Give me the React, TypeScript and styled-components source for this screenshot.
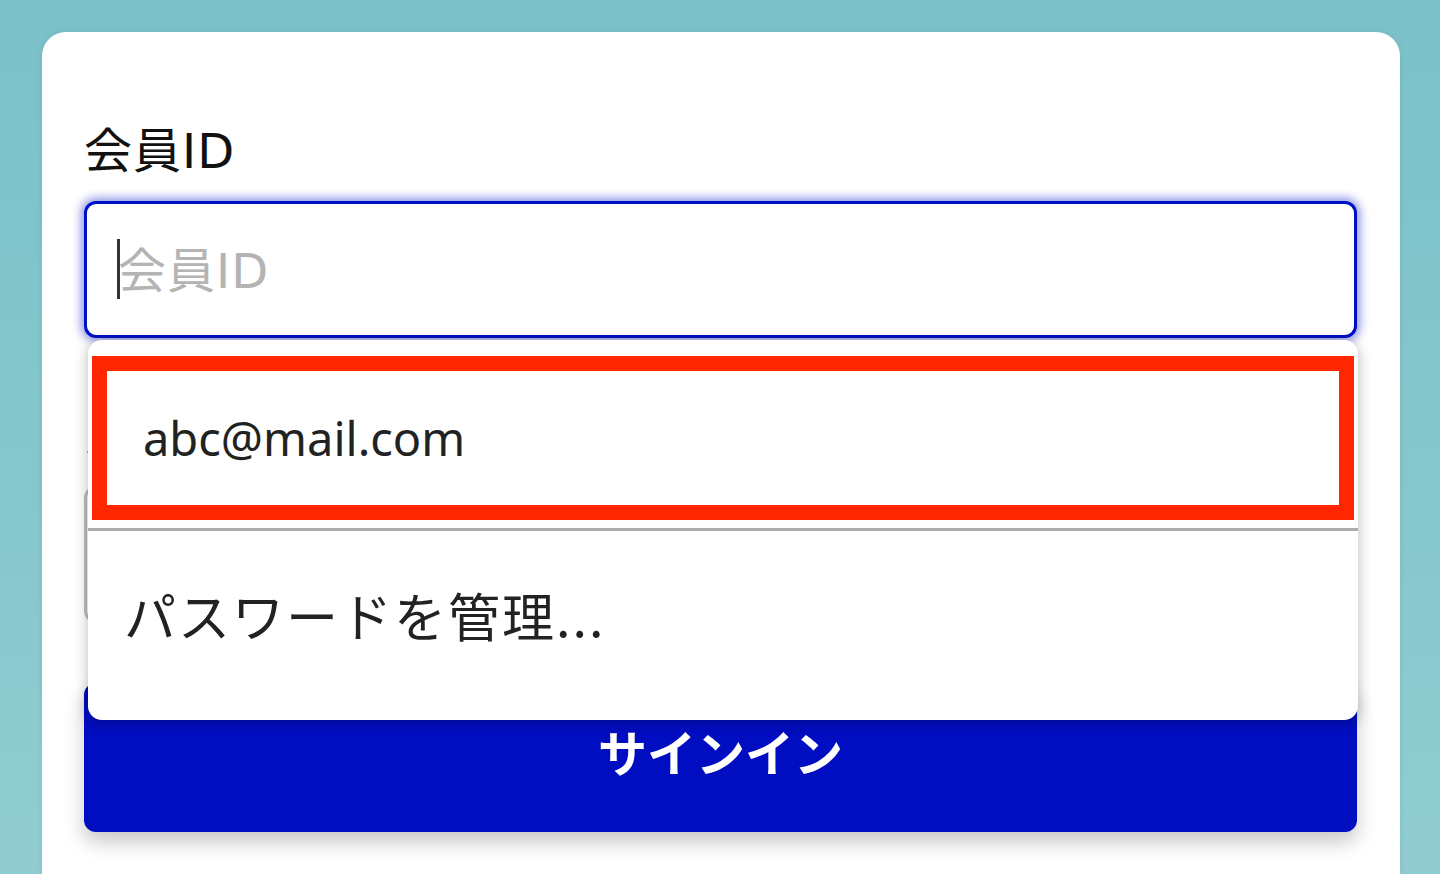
import React from 'react'
import styled, { createGlobalStyle } from 'styled-components'

const GlobalStyle = createGlobalStyle`
  html, body {
    margin: 0;
    padding: 0;
    height: 100%;
    overflow: hidden;
  }
  body {
    background: linear-gradient(180deg, #7bc1ca 0%, #85c7cc 55%, #91cdd0 100%);
    font-family: 'Noto Sans', 'Noto Sans CJK JP', sans-serif;
  }
`

const fieldBorder = {
  focus: '#0010c4',
  idle: '#bdbdbd'
}

export default function App() {
  return (
    <>
      <GlobalStyle />
      <S.Page>
        <S.Card>
          <S.Field>
            <S.Label>会員ID</S.Label>
            <S.InputWrap>
              <S.InputBox $focused>
                <S.Caret />
                <S.Placeholder>会員ID</S.Placeholder>
              </S.InputBox>
              <S.Dropdown>
                <S.Suggestion>
                  <S.Highlight>abc@mail.com</S.Highlight>
                </S.Suggestion>
                <S.Divider />
                <S.MenuAction>パスワードを管理...</S.MenuAction>
              </S.Dropdown>
            </S.InputWrap>
          </S.Field>

          <S.Field>
            <S.Label>パスワード</S.Label>
            <S.InputWrap>
              <S.InputBox />
            </S.InputWrap>
          </S.Field>

          <S.SubmitButton type='button'>サインイン</S.SubmitButton>
        </S.Card>
      </S.Page>
    </>
  )
}

const S = {
  Page: styled.div`
    width: 1440px;
    height: 874px;
    padding: 32px 40px 0 42px;
    box-sizing: border-box;
  `,
  Card: styled.div`
    background: #ffffff;
    border-radius: 24px 24px 0 0;
    height: 842px;
    box-sizing: border-box;
    padding: 83px 43px 0 42px;
    display: flex;
    flex-direction: column;
    gap: 62px;
    box-shadow: 0 0 6px rgba(0, 0, 0, 0.08);
  `,
  Field: styled.div`
    display: flex;
    flex-direction: column;
  `,
  Label: styled.div`
    font-size: 48px;
    letter-spacing: 1px;
    line-height: 72px;
    height: 64px;
    color: #111111;
    margin-bottom: 22px;
    font-family: 'DejaVu Sans', 'Noto Sans CJK JP', sans-serif;
  `,
  InputWrap: styled.div`
    position: relative;
  `,
  InputBox: styled.div<{ $focused?: boolean }>`
    height: 137px;
    box-sizing: border-box;
    border: 3px solid ${p => (p.$focused ? fieldBorder.focus : fieldBorder.idle)};
    border-radius: 12px;
    background: #ffffff;
    padding-left: 30px;
    display: flex;
    align-items: center;
    box-shadow: ${p => (p.$focused ? '0 0 10px 3px rgba(0, 16, 200, 0.45)' : 'none')};
  `,
  Caret: styled.span`
    display: inline-block;
    width: 3px;
    height: 60px;
    background: #333333;
    margin-right: -2px;
    margin-top: -2px;
    position: relative;
    z-index: 1;
  `,
  Placeholder: styled.span`
    font-size: 48px;
    letter-spacing: 1px;
    color: #b4b4b4;
    font-family: 'DejaVu Sans', 'Noto Sans CJK JP', sans-serif;
    line-height: 1;
    margin-top: 2px;
  `,
  Dropdown: styled.div`
    position: absolute;
    top: calc(100% + 2px);
    left: 4px;
    right: -1px;
    height: 380px;
    background: #ffffff;
    border-radius: 14px;
    box-shadow: 0 2px 14px rgba(0, 0, 0, 0.28);
    z-index: 10;
    display: flex;
    flex-direction: column;
    overflow: hidden;
  `,
  Suggestion: styled.div`
    padding: 16px 4px 8px;
  `,
  Highlight: styled.div`
    height: 164px;
    box-sizing: border-box;
    border: 15px solid #ff2600;
    padding-left: 36px;
    display: flex;
    align-items: center;
    font-size: 47px;
    color: #222222;
    font-family: 'Noto Sans', sans-serif;
  `,
  Divider: styled.div`
    height: 3px;
    background: #adadad;
  `,
  MenuAction: styled.div`
    flex: 1;
    display: flex;
    align-items: center;
    padding-left: 36px;
    padding-bottom: 22px;
    font-size: 52px;
    letter-spacing: 2px;
    color: #222222;
    font-family: 'Noto Sans CJK JP', sans-serif;
  `,
  SubmitButton: styled.button`
    height: 149px;
    margin-top: -2px;
    padding: 0 0 14px;
    border: none;
    border-radius: 12px;
    background: #000dc0;
    color: #ffffff;
    font-size: 49px;
    font-weight: 700;
    font-family: 'Noto Sans CJK JP', sans-serif;
    box-shadow: 0 10px 20px rgba(0, 0, 0, 0.22);
    cursor: pointer;
  `
}
